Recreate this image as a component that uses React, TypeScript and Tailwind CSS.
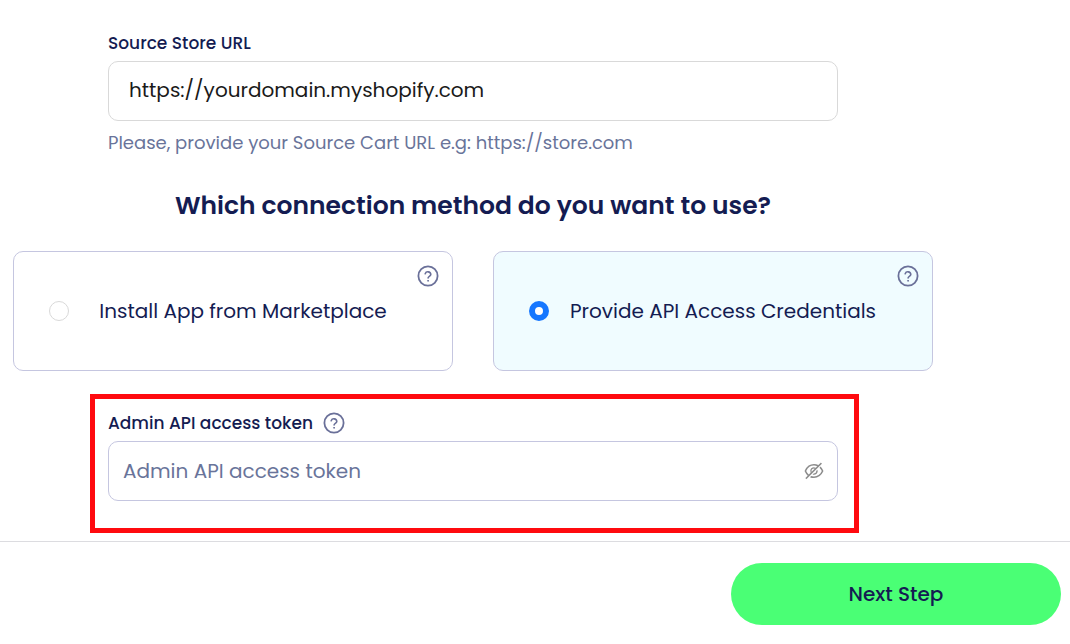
import React, { useState } from 'react';
import { AiOutlineEye, AiOutlineEyeInvisible } from 'react-icons/ai';

type ConnectionMethod = 'marketplace' | 'credentials';

const METHODS: { value: ConnectionMethod; label: string }[] = [
  { value: 'marketplace', label: 'Install App from Marketplace' },
  { value: 'credentials', label: 'Provide API Access Credentials' },
];

function HelpIcon() {
  return (
    <svg
      viewBox="0 0 22 22"
      className="size-[22px]"
      fill="none"
      stroke="currentColor"
      strokeLinecap="round"
      strokeLinejoin="round"
      aria-hidden="true"
    >
      <circle cx="11" cy="11" r="9.6" strokeWidth="1.8" />
      <path d="M8.2 8.7a2.9 2.9 0 0 1 5.6.7c0 1.8-2.7 2.1-2.7 3.6" strokeWidth="1.6" />
      <circle cx="11" cy="15.8" r="0.5" fill="currentColor" strokeWidth="0.8" />
    </svg>
  );
}

interface MethodCardProps {
  value: ConnectionMethod;
  label: string;
  checked: boolean;
  onSelect: (value: ConnectionMethod) => void;
}

const MethodCard: React.FC<MethodCardProps> = ({ value, label, checked, onSelect }) => (
  <div
    className={`relative rounded-[10px] border border-[#c5c6e0] ${checked ? 'bg-[#f0fcff]' : 'bg-white'}`}
  >
    <label className="flex h-[118px] cursor-pointer items-center px-[35px]">
      <input
        type="radio"
        name="connection-method"
        value={value}
        checked={checked}
        onChange={() => onSelect(value)}
        className="size-5 shrink-0 appearance-none rounded-full border border-[#d9d9d9] bg-white checked:border-[6px] checked:border-[#1677ff]"
      />
      <span className="flex-1 text-center text-[20px] leading-8">{label}</span>
    </label>
    <button
      type="button"
      aria-label={`Help: ${label}`}
      className="absolute right-[13px] top-[13px] cursor-pointer text-[#6a7099]"
    >
      <HelpIcon />
    </button>
  </div>
);

export default function App() {
  const [storeUrl, setStoreUrl] = useState('https://yourdomain.myshopify.com');
  const [method, setMethod] = useState<ConnectionMethod>('credentials');
  const [token, setToken] = useState('');
  const [showToken, setShowToken] = useState(false);

  return (
    <div className="bg-white font-[Poppins,Inter,sans-serif] text-[#141c52]">
      <form onSubmit={(e) => e.preventDefault()}>
        <div className="pl-[13px] pr-[137px] pt-[31px]">
          <div className="mx-[95px] flex flex-col">
            <label htmlFor="store-url" className="text-[17px] font-medium leading-6">
              Source Store URL
            </label>
            <input
              id="store-url"
              type="text"
              value={storeUrl}
              onChange={(e) => setStoreUrl(e.target.value)}
              className="mt-1.5 h-[60px] w-full rounded-[10px] border border-[#d9d9d9] px-5 pb-0.5 text-[20px] text-[#1a1a1a] outline-none"
            />
            <p className="mt-2.5 text-[18px] leading-6 text-[#69749a]">
              Please, provide your Source Cart URL e.g: https://store.com
            </p>
          </div>

          <h2 className="mt-[31px] text-center text-[25px] font-semibold leading-10">
            Which connection method do you want to use?
          </h2>

          <div className="mt-[25px] grid grid-cols-2 gap-10">
            {METHODS.map((m) => (
              <MethodCard
                key={m.value}
                value={m.value}
                label={m.label}
                checked={method === m.value}
                onSelect={setMethod}
              />
            ))}
          </div>

          <div className="ml-[77px] mr-[74px] mt-[23px] border-[5px] border-[#ff0a0f] pb-[27px] pl-[13px] pr-4 pt-3">
            <div className="flex items-center gap-2.5">
              <label htmlFor="api-token" className="text-[17px] font-medium leading-6">
                Admin API access token
              </label>
              <button
                type="button"
                aria-label="Help: Admin API access token"
                className="cursor-pointer text-[#6a7099]"
              >
                <HelpIcon />
              </button>
            </div>
            <div className="mt-1.5 flex h-[60px] items-center rounded-[10px] border border-[#c5c6e0] pl-3.5 pr-3">
              <input
                id="api-token"
                type={showToken ? 'text' : 'password'}
                value={token}
                onChange={(e) => setToken(e.target.value)}
                placeholder="Admin API access token"
                className="min-w-0 flex-1 text-[20px] outline-none placeholder:text-[#69749a]"
              />
              <button
                type="button"
                aria-label={showToken ? 'Hide token' : 'Show token'}
                onClick={() => setShowToken(!showToken)}
                className="cursor-pointer text-[#8c8c8c]"
              >
                {showToken ? <AiOutlineEye size={22} /> : <AiOutlineEyeInvisible size={22} />}
              </button>
            </div>
          </div>
        </div>

        <div className="mt-2 flex justify-end border-t border-[#dcdce0] pb-5 pr-[9px] pt-[21px]">
          <button
            type="submit"
            className="h-[62px] w-[330px] cursor-pointer rounded-full bg-[#4aff75] text-[20px] font-medium"
          >
            Next Step
          </button>
        </div>
      </form>
    </div>
  );
}
